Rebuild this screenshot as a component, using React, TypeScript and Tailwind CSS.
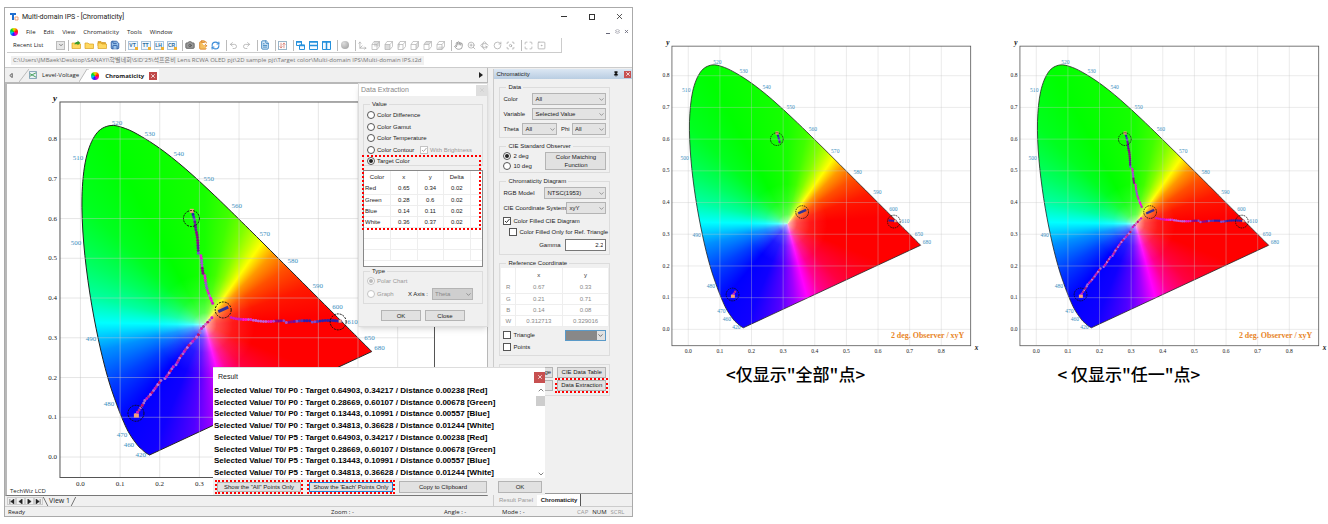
import React, { useId } from 'react';
import {
    ArrowDownUp,
    Camera,
    ChevronDown,
    ChevronUp,
    ClipboardPaste,
    FileText,
    Hand,
    Layers2,
    Maximize,
    Move3d,
    Pin,
    Redo2,
    RefreshCw,
    Rotate3d,
    RotateCw,
    Save,
    ScanSearch,
    SquareDot,
    Undo2,
    X,
    ZoomIn,
} from 'lucide-react';

type Point = [number, number];

/* ---------- CIE 1931 chart ---------- */

const px = (x: number) => 20.5 + x * 397;
const py = (y: number) => 355.5 - y * 398;

const locus: Point[] = [
    [0.1741, 0.005], [0.1644, 0.0109], [0.1566, 0.0177], [0.144, 0.0297],
    [0.1241, 0.0578], [0.1096, 0.0868], [0.0913, 0.1327], [0.0687, 0.2007], [0.0454, 0.295],
    [0.0235, 0.4127], [0.0082, 0.5384], [0.0039, 0.6548], [0.0139, 0.7502],
    [0.0389, 0.812], [0.0743, 0.8338], [0.1142, 0.8262],
    [0.1547, 0.8059], [0.1929, 0.7816], [0.2296, 0.7543], [0.2658, 0.7243], [0.3016, 0.6923],
    [0.3373, 0.6589], [0.3731, 0.6245], [0.4441, 0.5547], [0.5125, 0.4866], [0.5752, 0.4242],
    [0.627, 0.3725], [0.6658, 0.334], [0.6915, 0.3083], [0.726, 0.274], [0.7347, 0.2653],
];

// Catmull-Rom through the locus, closed by the straight purple line
const outline = (() => {
    const pts = locus.map(([x, y]) => [px(x), py(y)]);
    let d = `M${pts[0][0]} ${pts[0][1]}`;
    for (let i = 0; i < pts.length - 1; i++) {
        const a = pts[Math.max(0, i - 1)];
        const b = pts[i];
        const c = pts[i + 1];
        const e = pts[Math.min(pts.length - 1, i + 2)];
        d += `C${b[0] + (c[0] - a[0]) / 6} ${b[1] + (c[1] - a[1]) / 6} ${c[0] - (e[0] - b[0]) / 6} ${c[1] - (e[1] - b[1]) / 6} ${c[0]} ${c[1]}`;
    }
    return d + 'Z';
})();

const wavelengths: [string, number, number][] = [
    ['520', 57, 21], ['530', 90, 32], ['540', 119, 52], ['550', 149, 77], ['560', 177, 104],
    ['570', 205, 132], ['580', 233, 159], ['590', 258, 184], ['600', 278, 205], ['610', 293, 220],
    ['650', 310, 236], ['680', 320, 246], ['510', 18, 56], ['500', 16, 141], ['490', 31, 237],
    ['480', 49, 302], ['470', 62, 333], ['460', 69, 343], ['420', 81, 353],
];

const ticks = [0, 0.1, 0.2, 0.3, 0.4, 0.5, 0.6, 0.7, 0.8];

const targets: Point[] = [[0.65, 0.34], [0.28, 0.6], [0.14, 0.11], [0.36, 0.37]];

// measured tracks, running from each primary towards the white point
const tracks: Point[][] = [
    [[132.5, 110], [135, 128], [140, 154], [145, 174], [153, 204]],
    [[281, 219.5], [250, 220], [224, 220], [191, 218], [169, 215]],
    [[76, 313], [84, 299], [104, 277], [116, 263], [124, 252], [141, 229], [153, 214]],
];

const trackColors = ['#2a20b0', '#4a34b8', '#7a4fd0', '#6a10a0', '#8a0a8a', '#a050d0', '#e020d0', '#c060d8', '#ff10e0', '#d018c8'];
const blueTrackColors = ['#a86ad0', '#d018c8', '#b03090', '#d070d8', '#c01070'];

const samples = tracks.flatMap((track, t) =>
    track.slice(1).flatMap((end, i) => {
        const start = track[i];
        const length = Math.hypot(end[0] - start[0], end[1] - start[1]);
        const count = Math.max(4, Math.round(length / 2.6));
        return Array.from({ length: count }, (_, k) => {
            const f = k / count;
            const progress = (i + f) / (track.length - 1);
            const jitter = Math.sin(k * 12.9 + i * 7.3 + t * 3.1);
            const band = Math.min(9, Math.max(0, Math.floor(progress * 9 + jitter * 1.8)));
            return {
                x: start[0] + (end[0] - start[0]) * f + (t === 1 ? 0 : jitter * 1.2),
                y: start[1] + (end[1] - start[1]) * f + (t === 1 ? jitter : 0),
                color: t === 2 ? blueTrackColors[k % 5] : trackColors[band],
            };
        });
    }),
);

const nearTarget = (x: number, y: number) =>
    targets.some(([tx, ty]) => Math.hypot(x - px(tx), y - py(ty)) < 7);

type ChartProps = { mode: 'all' | 'each'; xLabels?: number[]; note?: string };

const ChromaticityChart = ({ mode, xLabels = ticks, note }: ChartProps) => {
    const clip = useId();
    const dots = mode === 'each' ? samples : samples.filter((s) => nearTarget(s.x, s.y));

    return (
        <svg viewBox="-20 -14 407 400" className="block w-full font-['Liberation_Serif',serif]" role="img" aria-label="CIE 1931 diagram">
            <defs>
                <clipPath id={clip}>
                    <path d={outline} />
                </clipPath>
            </defs>
            <foreignObject x="0" y="0" width="375" height="376" clipPath={`url(#${clip})`}>
                <div className="h-[376px] w-[375px] bg-[radial-gradient(circle_at_145px_223px,rgba(255,255,255,0.75)_0px,rgba(255,255,255,0.3)_12px,rgba(255,255,255,0.1)_28px,transparent_50px),conic-gradient(from_0deg_at_145px_223px,#18ff00_0deg,#40ff00_12deg,#80ff00_22deg,#c0ff00_29deg,#ffff00_35deg,#ff9800_44deg,#ff5000_55deg,#ff1800_70deg,#ff0000_86deg,#ff0000_112deg,#ff0040_138deg,#ff0090_154deg,#ff00ff_165deg,#a000ff_175deg,#5000ff_186deg,#1000ff_202deg,#0000ff_220deg,#0040ff_238deg,#0090ff_256deg,#00ffff_271deg,#00ffa0_284deg,#00ff60_298deg,#00ff20_315deg,#00ff00_332deg,#18ff00_360deg)]" />
            </foreignObject>
            <path d={outline} fill="none" stroke="#222" strokeWidth="1" />
            <g stroke="#c8c8c8" strokeOpacity="0.45" strokeWidth="1">
                {ticks.map((t) => (
                    <g key={t}>
                        <line x1={px(t)} x2={px(t)} y1="0" y2="376" />
                        <line x1="0" x2="375" y1={py(t)} y2={py(t)} />
                    </g>
                ))}
            </g>
            <rect width="375" height="376" fill="none" stroke="#555" strokeWidth="1" />
            {dots.map((d, i) => (
                <circle key={i} cx={d.x} cy={d.y} r="1.500" fill={d.color} />
            ))}
            <path d="M158.500 210L168.500 205.500" stroke="#33309a" strokeWidth="3" />
            <g fill="#f5a07a">
                <rect x="130" y="107" width="4" height="4" />
                <rect x="279" y="218" width="3" height="3" />
                <rect x="74" y="312" width="5" height="4" />
            </g>
            {targets.map(([x, y]) => (
                <circle key={x} cx={px(x)} cy={py(y)} r="8" fill="none" stroke="#111" strokeDasharray="2 1" />
            ))}
            <g fill="#3d8fc0" fontSize="7" textAnchor="middle">
                {wavelengths.map(([name, x, y]) => (
                    <text key={name} x={x} y={y + 2}>{name}</text>
                ))}
            </g>
            <g fill="#222" fontSize="7">
                {ticks.map((t) => (
                    <text key={t} x="-3" y={py(t) + 2} textAnchor="end">{t.toFixed(1)}</text>
                ))}
                {xLabels.map((t) => (
                    <text key={t} x={px(t)} y="385" textAnchor="middle">{t.toFixed(1)}</text>
                ))}
            </g>
            <g fill="#111" fontSize="9" fontWeight="bold" fontStyle="italic">
                <text x="-7" y="-1">y</text>
                {note && <text x="380" y="382">x</text>}
            </g>
            {note && (
                <text x="367" y="366" textAnchor="end" fill="#e8862a" fontSize="10" fontWeight="bold">
                    {note}
                </text>
            )}
        </svg>
    );
};

/* ---------- small controls ---------- */

const Select = ({ label, value, className = '', disabled }: { label: string; value: string; className?: string; disabled?: boolean }) => (
    <span className={`relative block h-[12px] ${className}`}>
        <select
            aria-label={label}
            disabled={disabled}
            defaultValue={value}
            className="block h-full w-full appearance-none border border-[#b4b4b4] bg-[#e3e3e3] pl-[2px] leading-[10px] disabled:bg-[#cfcfcf] disabled:text-[#888]"
        >
            <option>{value}</option>
        </select>
        <ChevronDown size={7} className="pointer-events-none absolute right-[1px] top-[3px] text-[#666]" />
    </span>
);

const Button = ({ children, className = '' }: { children: React.ReactNode; className?: string }) => (
    <button className={`border border-[#b4b4b4] bg-[#e1e1e1] text-center leading-[8px] ${className}`}>{children}</button>
);

const Choice = ({ type, name, label, checked, disabled }: { type: 'radio' | 'checkbox'; name: string; label: string; checked?: boolean; disabled?: boolean }) => (
    <label className={`flex h-[8px] items-center gap-[2px] whitespace-nowrap ${disabled ? 'text-[#999]' : ''}`}>
        <span className="relative flex size-[8px] flex-none items-center justify-center">
            <input
                type={type}
                name={name}
                defaultChecked={checked}
                disabled={disabled}
                className={`peer absolute inset-0 size-[8px] appearance-none border border-[#555] bg-white disabled:border-[#c4c4c4] ${type === 'radio' ? 'rounded-full' : ''}`}
            />
            {type === 'radio' ? (
                <i className="pointer-events-none relative hidden size-[4px] rounded-full bg-[#222] peer-checked:block peer-disabled:bg-[#bbb]" />
            ) : (
                <svg viewBox="0 0 8 8" className="pointer-events-none relative hidden size-[8px] peer-checked:block">
                    <path d="M2 4l1.500 1.500L6.500 2" fill="none" stroke={disabled ? '#aaa' : '#333'} />
                </svg>
            )}
        </span>
        {label}
    </label>
);

const Group = ({ title, className = '', children }: { title: string; className?: string; children: React.ReactNode }) => (
    <fieldset className={`min-w-0 border border-[#dcdcdc] px-[3px] ${className}`}>
        <legend className="ml-[3px] px-[2px] leading-[8px]">{title}</legend>
        {children}
    </fieldset>
);

const ColorWheel = () => (
    <i className="block size-[8px] rounded-full bg-[conic-gradient(#f0e000,#ff2000_20%,#f000c0_38%,#2020ff_55%,#00c8f0_70%,#00d020_85%,#f0e000)]" />
);

const Logo = () => (
    <svg viewBox="0 0 9 9" className="size-[9px]">
        <path d="M0 1h6v2H4v5H2V3H0z" fill="#1f6fd0" />
        <path d="M5 5h3v3H5z" fill="#fff" stroke="#e89060" strokeWidth=".8" />
    </svg>
);

/* ---------- toolbar ---------- */

const Tag = ({ text }: { text: string }) => (
    <span className="relative block h-[9px] w-[10px] border border-[#a9c4dc] bg-[#f3f8fc] text-center text-[5px] font-bold leading-[7px] text-[#2a6a9c]">
        {text}
        <i className="absolute -bottom-px -right-px size-[3px] bg-[#f0b030]" />
    </span>
);

const Split = ({ vertical }: { vertical?: boolean }) => (
    <svg viewBox="0 0 9 9" className="size-[9px]">
        <path d="M.5.500h8v8h-8z" fill="#f4faff" stroke="#2590dc" />
        <path d={vertical ? 'M4.500 1v7M0 1h9' : 'M0 1h9M0 4.500h9'} stroke="#2590dc" strokeWidth="1.500" />
    </svg>
);

const Cascade = () => (
    <svg viewBox="0 0 9 9" className="size-[9px]">
        <path d="M.5.500h5v4h-5zM3.500 4h5v4.500h-5z" fill="#f4faff" stroke="#2590dc" />
        <path d="M0 1h6M3 4.500h6" stroke="#2590dc" strokeWidth="1.500" />
    </svg>
);

// folder with its front flap, optionally stacked or with the green "open" arrow
const FolderIcon = ({ open, stack }: { open?: boolean; stack?: boolean }) => (
    <svg viewBox="0 0 10 10" className="size-[10px]">
        {stack && <path d="M1 1.500h3l1 1h3.500V6H1z" fill="#e8b030" stroke="#c88c18" strokeWidth=".6" />}
        <path d="M1 3h3l1 1h4.500v4.500H1z" fill="#ffd860" stroke="#d8a020" strokeWidth=".7" />
        {open && <path d="M3.500 4.500c0-2 1.500-2.500 3-2.500V.5L9.500 3l-3 2.200V4c-1.500 0-2 .2-3 .5z" fill="#3a9a28" />}
    </svg>
);

// wire cube with one face shaded
const Cube = ({ face }: { face: string }) => (
    <svg viewBox="0 0 9 9" className="size-[9px]">
        <path d={face} fill="#ddd" />
        <path d="M1 3.500h5v5H1zM3 .5h5.500v5M1 3.500l2-3M6 3.500l2.500-3M6 8.500l2.500-3" fill="none" stroke="#b0b0b0" strokeWidth=".7" />
    </svg>
);

const gray = 'text-[#aaa]';

const toolbar: React.ReactNode[][] = [
    [
        <FolderIcon open />,
        <FolderIcon />,
        <FolderIcon stack />,
        <Save size={10} className="fill-[#9cc4ec] text-[#1d4f9c]" />,
    ],
    [<Tag text="VT" />, <Tag text="TT" />, <Tag text="LH" />, <Tag text="CR" />],
    [
        <Camera size={10} className="fill-[#999] text-[#555]" />,
        <ClipboardPaste size={10} className="fill-[#f6c060] text-[#d88028]" />,
        <RefreshCw size={9} strokeWidth={3} className="text-[#3c8cd8]" />,
    ],
    [<Undo2 size={9} className={gray} />, <Redo2 size={9} className={gray} />],
    [<FileText size={10} className="fill-[#d4e8f8] text-[#2a78b8]" />],
    [<ArrowDownUp size={9} className="border border-[#99b4c8] text-[#c84838]" />],
    [<Cascade />, <Split />, <Split vertical />],
    [<i className="block size-[8px] rounded-full bg-[radial-gradient(circle_at_35%_30%,#ddd,#999)]" />],
    [
        <Move3d size={9} className={gray} />,
        <Cube face="M3 .5h5.500v5H3z" />,
        <Cube face="M1 3.500h5v5H1z" />,
        <Cube face="M1 3.500l2-3v5l-2 3z" />,
        <Cube face="M6 3.500l2.500-3v5L6 8.500z" />,
        <Cube face="M1 3.500l2-3h5.500L6 3.500z" />,
        <Cube face="M1 8.500l2-3h5.500L6 8.500z" />,
    ],
    [
        <Hand size={9} className="text-[#888]" />,
        <ZoomIn size={9} className={gray} />,
        <Rotate3d size={9} className={gray} />,
        <RotateCw size={9} className={gray} />,
        <ScanSearch size={9} className={gray} />,
    ],
    [<Maximize size={9} className={gray} />, <SquareDot size={9} className={gray} />],
];

const Toolbar = () => (
    <div className="mx-[2px] flex h-[15px] w-[555px] items-center border-b border-r border-[#ccc] pl-[6px]">
        <span className="w-[43px] font-['Open_Sans',sans-serif]">Recent List</span>
        <button aria-label="Recent list" className="flex size-[9px] items-center justify-center border border-[#bbb] bg-[#e6e6e6]">
            <ChevronDown size={6} />
        </button>
        {toolbar.map((group, i) => (
            <div key={i} className="ml-[4px] flex items-center border-l border-[#bbb] first-of-type:ml-[3px]">
                {group.map((icon, k) => (
                    <button key={k} aria-label={`Tool ${i}-${k}`} className="flex h-[11px] w-[13px] items-center justify-center">
                        {icon}
                    </button>
                ))}
            </div>
        ))}
    </div>
);

/* ---------- dialogs ---------- */

const extractionRows = [
    ['Red', '0.65', '0.34', '0.02'],
    ['Green', '0.28', '0.6', '0.02'],
    ['Blue', '0.14', '0.11', '0.02'],
    ['White', '0.36', '0.37', '0.02'],
    ['', '', '', ''],
    ['', '', '', ''],
    ['', '', '', ''],
];

const DataExtraction = () => (
    <section className="absolute left-[353px] top-[75px] w-[130px] border border-[#ddd] bg-[#f0f0f0] pb-[5px] shadow-md">
        <header className="flex h-[12px] items-center justify-between bg-white pl-[2px] text-[7px] text-[#888]">
            Data Extraction
            <button aria-label="Close data extraction" className="flex size-[11px] items-center justify-center bg-[#dedede] text-[#c4c4c4]">
                <X size={6} />
            </button>
        </header>
        <div className="px-[4px] pt-[4px]">
            <Group title="Value">
                <div className="flex h-[57px] flex-col justify-between pt-[3px]">
                    <Choice type="radio" name="value" label="Color Difference" />
                    <Choice type="radio" name="value" label="Color Gamut" />
                    <Choice type="radio" name="value" label="Color Temperature" />
                    <div className="flex justify-between pr-[7px]">
                        <Choice type="radio" name="value" label="Color Contour" />
                        <Choice type="checkbox" name="brightness" label="With Brightness" checked disabled />
                    </div>
                    <Choice type="radio" name="value" label="Target Color" checked />
                </div>
            </Group>
            <div className="mt-[4px] h-[97px] border border-[#888] bg-white">
                <table className="w-full table-fixed border-collapse text-center leading-[8px]">
                    <thead>
                        <tr className="h-[12px]">
                            {['Color', 'x', 'y', 'Delta'].map((h) => (
                                <th key={h} className="border-r border-[#eee] font-normal">{h}</th>
                            ))}
                            <th className="w-[12px]" />
                        </tr>
                    </thead>
                    <tbody>
                        {extractionRows.map((row, i) => (
                            <tr key={i} className="h-[11px] border-b border-[#eee]">
                                {row.map((cell, k) => (
                                    <td key={k} className="border-r border-[#eee] first:pl-[1px] first:text-left">{cell}</td>
                                ))}
                                <td />
                            </tr>
                        ))}
                    </tbody>
                </table>
            </div>
            <Group title="Type" className="pb-[3px]">
                <div className="pt-[2px]">
                    <Choice type="radio" name="type" label="Polar Chart" checked disabled />
                </div>
                <div className="mt-[3px] flex items-center">
                    <Choice type="radio" name="type" label="Graph" disabled />
                    <span className="ml-auto mr-[4px]">X Axis :</span>
                    <Select label="X axis" value="Theta" className="mr-[6px] w-[41px]" disabled />
                </div>
            </Group>
            <div className="mt-[6px] flex justify-center gap-[4px]">
                <Button className="h-[11px] w-[40px]">OK</Button>
                <Button className="h-[11px] w-[40px]">Close</Button>
            </div>
        </div>
        <div className="pointer-events-none absolute left-[3px] top-[71px] h-[75px] w-[119px] border-2 border-dotted border-[#f00]" />
    </section>
);

const results = ['P0', 'P5'].flatMap((p) => [
    `Selected Value/ T0/ ${p} : Target 0.64903, 0.34217 / Distance 0.00238 [Red]`,
    `Selected Value/ T0/ ${p} : Target 0.28669, 0.60107 / Distance 0.00678 [Green]`,
    `Selected Value/ T0/ ${p} : Target 0.13443, 0.10991 / Distance 0.00557 [Blue]`,
    `Selected Value/ T0/ ${p} : Target 0.34813, 0.36628 / Distance 0.01244 [White]`,
]);

const ResultDialog = () => (
    <section className="absolute left-[208px] top-[359px] w-[332px] border-t border-[#ddd] bg-white">
        <header className="flex h-[18px] items-center justify-between pl-[5px] text-[7px]">
            Result
            <button aria-label="Close result" className="flex size-[11px] items-center justify-center bg-[#c75050] text-white">
                <X size={6} strokeWidth={3} />
            </button>
        </header>
        <div className="flex h-[92px] justify-between">
            <ul className="flex flex-col justify-between whitespace-nowrap pl-[1px] text-[8px] font-bold leading-[10px] text-black">
                {results.map((r) => (
                    <li key={r}>{r}</li>
                ))}
            </ul>
            <div className="flex w-[9px] flex-col items-center text-[#444]">
                <ChevronUp size={8} />
                <i className="mt-[2px] block h-[10px] w-full bg-[#cdcdcd]" />
                <ChevronDown size={8} className="mt-auto" />
            </div>
        </div>
        <footer className="flex h-[17px] items-center gap-[4px] bg-[#f0f0f0] px-[2px]">
            <span className="border-2 border-dotted border-[#f00]">
                <Button className="block h-[10px] w-[84px]">Show the &quot;All&quot; Points Only</Button>
            </span>
            <span className="border-2 border-dotted border-[#f00]">
                <button className="block h-[10px] w-[84px] border border-[#2080d8] bg-[#e1e1e1] leading-[8px]">Show the &apos;Each&apos; Points Only</button>
            </span>
            <Button className="h-[12px] w-[88px]">Copy to Clipboard</Button>
            <Button className="ml-[7px] h-[12px] w-[44px]">OK</Button>
        </footer>
    </section>
);

/* ---------- right panel ---------- */

const reference = [
    ['R', '0.67', '0.33'],
    ['G', '0.21', '0.71'],
    ['B', '0.14', '0.08'],
    ['W', '0.312713', '0.329016'],
];

const SidePanel = () => (
    <aside className="mt-[1px] flex w-[139px] flex-none flex-col border-l border-[#ccc]">
        <header className="flex h-[10px] items-center bg-gradient-to-b from-[#dce7f3] to-[#b9cde2] pl-[2px]">
            <span className="mr-auto">Chromaticity</span>
            <Pin size={6} className="mr-[5px] fill-black" />
            <button aria-label="Close panel" className="mr-[1px] flex size-[7px] items-center justify-center bg-[#c75050] text-white">
                <X size={6} strokeWidth={3} />
            </button>
        </header>
        <div className="ml-[5px] mr-[22px] flex flex-col gap-[4px] pt-[4px]">
            <Group title="Data">
                <div className="flex flex-col gap-[3px] pb-[2px] pt-[2px]">
                    <div className="flex items-center">
                        <span className="w-[29px]">Color</span>
                        <Select label="Color" value="All" className="flex-1" />
                    </div>
                    <div className="flex items-center">
                        <span className="w-[29px]">Variable</span>
                        <Select label="Variable" value="Selected Value" className="flex-1" />
                    </div>
                    <div className="flex items-center">
                        <span className="w-[19px]">Theta</span>
                        <Select label="Theta" value="All" className="flex-1" />
                        <span className="w-[15px] pl-[4px]">Phi</span>
                        <Select label="Phi" value="All" className="flex-1" />
                    </div>
                </div>
            </Group>
            <Group title="CIE Standard Observer">
                <div className="flex justify-between pb-[2px] pt-[2px]">
                    <div className="flex flex-col justify-between">
                        <Choice type="radio" name="observer" label="2 deg" checked />
                        <Choice type="radio" name="observer" label="10 deg" />
                    </div>
                    <Button className="h-[18px] w-[61px] px-[4px]">Color Matching Function</Button>
                </div>
            </Group>
            <Group title="Chromaticity Diagram">
                <div className="flex flex-col gap-[3px] pb-[3px] pt-[2px]">
                    <div className="flex items-center justify-between">
                        RGB Model
                        <Select label="RGB model" value="NTSC(1953)" className="w-[62px]" />
                    </div>
                    <div className="flex items-center justify-between whitespace-nowrap">
                        CIE Coordinate System
                        <Select label="CIE coordinate system" value="xyY" className="w-[40px]" />
                    </div>
                    <Choice type="checkbox" name="filled" label="Color Filled CIE Diagram" checked />
                    <div className="pl-[6px]">
                        <Choice type="checkbox" name="triangleOnly" label="Color Filled Only for Ref. Triangle" />
                    </div>
                    <label className="flex items-center justify-end gap-[5px]">
                        Gamma
                        <input defaultValue="2.2" className="h-[12px] w-[41px] border border-[#777] bg-white px-[2px] text-right" />
                    </label>
                </div>
            </Group>
            <Group title="Reference Coordinate">
                <table className="-mx-[2px] mt-[1px] w-[108px] bg-white text-center leading-[8px] text-[#888]">
                    <thead>
                        <tr className="h-[14px] text-[#333]">
                            <th className="w-[14px]" />
                            <th className="border-x border-[#eee] font-normal">x</th>
                            <th className="border-r border-[#eee] font-normal">y</th>
                        </tr>
                    </thead>
                    <tbody>
                        {reference.map((row) => (
                            <tr key={row[0]} className="h-[11px] border-b border-[#eee]">
                                {row.map((cell) => (
                                    <td key={cell} className="border-r border-[#eee]">{cell}</td>
                                ))}
                            </tr>
                        ))}
                    </tbody>
                </table>
                <div className="flex items-center justify-between pt-[3px]">
                    <Choice type="checkbox" name="triangle" label="Triangle" />
                    <button aria-label="Triangle color" className="flex h-[11px] w-[41px] border border-[#5a9ac8] bg-[#888]">
                        <span className="ml-auto flex h-full w-[8px] items-center bg-[#e1e1e1]">
                            <ChevronDown size={7} />
                        </span>
                    </button>
                </div>
                <div className="pb-[4px] pt-[2px]">
                    <Choice type="checkbox" name="points" label="Points" />
                </div>
            </Group>
            <div className="mt-[4px] grid grid-cols-2 gap-x-[4px] gap-y-[2px] border border-[#dcdcdc] px-[3px] pb-[4px] pt-[2px]">
                <Button className="h-[11px]">Gamut Coverage</Button>
                <Button className="h-[11px]">CIE Data Table</Button>
                <Button className="h-[11px]">Coordinates</Button>
                <span className="relative flex">
                    <Button className="h-[11px] flex-1 whitespace-nowrap">Data Extraction</Button>
                    <i className="pointer-events-none absolute -inset-x-[2px] -inset-y-[2px] border-2 border-dotted border-[#f00]" />
                </span>
            </div>
        </div>
        <div className="mt-auto flex h-[13px] border-t border-[#999] bg-[#f0f0f0]">
            <button className="w-[43px] text-center text-[#999]">Result Panel</button>
            <button className="w-[44px] border-r border-[#555] bg-white font-bold">Chromaticity</button>
        </div>
    </aside>
);

/* ---------- application window ---------- */

const AppWindow = () => (
    <div className="relative border border-[#aaa] bg-white font-['Liberation_Sans',Arial,sans-serif] text-[6px] leading-[8px] text-[#222]">
        <header className="flex h-[17px] items-center gap-[3px] pl-[5px] font-['Roboto',sans-serif] text-[7px]">
            <Logo />
            <h1 className="mr-auto">Multi-domain IPS - [Chromaticity]</h1>
            <button aria-label="Minimize" className="flex w-[25px] justify-center"><i className="h-px w-[6px] bg-[#333]" /></button>
            <button aria-label="Maximize" className="flex w-[25px] justify-center"><i className="size-[6px] border border-[#333]" /></button>
            <button aria-label="Close" className="flex w-[25px] justify-center"><X size={9} /></button>
        </header>
        <nav className="flex h-[13px] items-center gap-[8px] pl-[5px] font-['Open_Sans',sans-serif]">
            <ColorWheel />
            {['File', 'Edit', 'View', 'Chromaticity', 'Tools', 'Window'].map((item) => (
                <button key={item}>{item}</button>
            ))}
            <div className="ml-auto flex gap-[4px] pr-[3px] text-[#667]">
                <button aria-label="Minimize view" className="flex size-[5px] items-end"><i className="h-px w-[4px] bg-[#667]" /></button>
                <button aria-label="Restore view"><Layers2 size={5} /></button>
                <button aria-label="Close view"><X size={5} strokeWidth={4} /></button>
            </div>
        </nav>
        <Toolbar />
        <div className="flex h-[14px] items-center pl-[6px]">
            <p className="whitespace-nowrap bg-[#f0f0f0] px-[2px] font-['Open_Sans','Noto_Sans_CJK_KR',sans-serif] leading-[9px] text-[#777]">
                C:\Users\JMBaek\Desktop\SANAYI\학별네회\SID&apos;25\석프은비 Lens RCWA OLED pjt\2D sample pjt\Target color\Multi-domain IPS\Multi-domain IPS.t2d
            </p>
        </div>
        <div className="flex border-t border-[#ccc] bg-[#f0f0f0]">
            <main className="mr-[5px] min-w-0 flex-1">
                <div className="flex h-[14px] items-center border-r border-[#bbb] pl-[4px] font-['Open_Sans',sans-serif]">
                    <svg viewBox="0 0 4 6" className="mr-[6px] h-[5px] w-[4px]"><path d="M3.500.500v5L.5 3z" fill="none" stroke="#222" strokeWidth=".8" /></svg>
                    <svg viewBox="0 0 10 13" className="h-[13px] w-[10px]"><path d="M0 13L10 0" stroke="#bbb" /></svg>
                    <svg viewBox="0 0 9 9" className="mr-[5px] size-[8px]">
                        <path d="M.5.500h8v8h-8z" fill="#e8f0f4" stroke="#7a9cb0" />
                        <path d="M1 6l3-2 4-2M1 3l7 4" fill="none" stroke="#3a9a50" />
                    </svg>
                    <button>Level-Voltage</button>
                    <svg viewBox="0 0 10 13" className="h-[13px] w-[10px]">
                        <path d="M0 13L8 0h2v13z" fill="#fff" />
                        <path d="M0 13L8 0h2" fill="none" stroke="#bbb" />
                    </svg>
                    <div className="flex h-[13px] items-center self-end bg-white pl-[2px] pr-[2px]">
                        <ColorWheel />
                        <button className="ml-[6px] mr-[5px] font-bold">Chromaticity</button>
                        <button aria-label="Close tab" className="flex size-[8px] items-center justify-center bg-[#c04848] text-white"><X size={6} strokeWidth={3} /></button>
                    </div>
                    <svg viewBox="0 0 4 6" className="ml-auto mr-[4px] h-[6px] w-[4px]"><path d="M0 0v6l4-3z" fill="#222" /></svg>
                </div>
                <div className="border-b border-l-2 border-t-2 border-r border-[#b8b8b8] border-b-[#777] bg-white pt-[4px]">
                    <div className="pl-[33px] pr-[41px]">
                        <ChromaticityChart mode="each" xLabels={[0, 0.1, 0.2, 0.3]} />
                    </div>
                    <p className="pl-[3px] font-['Open_Sans',sans-serif]">TechWiz LCD</p>
                </div>
                <div className="flex h-[10px] items-center pl-[2px] font-['Open_Sans',sans-serif]">
                    {['M2 0v6M7 0v6L3 3z', 'M6 0v6L2 3z', 'M2 0v6l4-3z', 'M6 0v6M1 0v6l4-3z'].map((d) => (
                        <button key={d} aria-label="Scroll views" className="flex h-[8px] w-[9px] items-center justify-center border border-[#ccc]">
                            <svg viewBox="0 0 8 6" className="h-[5px] w-[7px]"><path d={d} fill="#222" stroke="#222" strokeWidth=".6" /></svg>
                        </button>
                    ))}
                    <svg viewBox="0 0 6 10" className="h-[9px] w-[6px]"><path d="M0 0l5 10" stroke="#444" strokeWidth=".8" /></svg>
                    <button className="text-[7px]">View 1</button>
                    <svg viewBox="0 0 6 10" className="h-[9px] w-[6px]"><path d="M6 0L1 10" stroke="#444" strokeWidth=".8" /></svg>
                </div>
            </main>
            <SidePanel />
        </div>
        <footer className="flex h-[10px] items-center border-t border-[#ccc] bg-[#f0f0f0] pl-[3px] pr-[2px] font-['Open_Sans',sans-serif]">
            <span className="w-[323px]">Ready</span>
            <span className="w-[113px]">Zoom : -</span>
            <span className="w-[58px]">Angle : -</span>
            <span className="mr-auto">Mode : -</span>
            <span className="flex gap-[4px] pr-[6px] text-[#999]">
                <span>CAP</span>
                <span className="text-[#222]">NUM</span>
                <span>SCRL</span>
            </span>
        </footer>
        <DataExtraction />
        <ResultDialog />
    </div>
);

const Example = ({ mode, caption, className }: { mode: 'all' | 'each'; caption: string; className: string }) => (
    <figure className="pt-[28px]">
        <ChromaticityChart mode={mode} note="2 deg. Observer / xyY" />
        <figcaption className={`pt-[8px] text-center font-['Noto_Sans_CJK_SC',sans-serif] text-[17px] font-medium leading-[24px] text-black ${className}`}>
            {caption}
        </figcaption>
    </figure>
);

const App = () => {
    return (
        <div className="min-h-screen bg-white pl-[4px] pt-[7px]">
            <div className="grid grid-cols-[629fr_324fr_324fr] items-start gap-x-[23px]">
                <AppWindow />
                <Example mode="all" caption={'<仅显示"全部"点>'} className="pr-[46px]" />
                <Example mode="each" caption={'< 仅显示"任一"点>'} className="pr-[74px]" />
            </div>
        </div>
    );
};

export default App;
